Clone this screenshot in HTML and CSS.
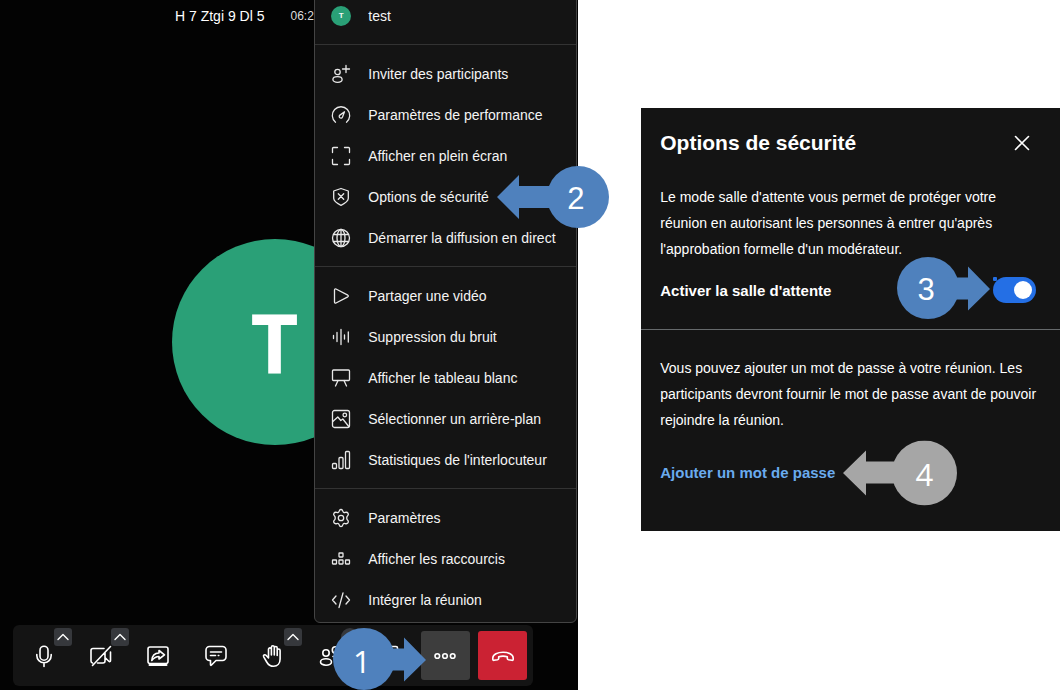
FILE: index.html
```html
<!DOCTYPE html>
<html lang="fr">
<head>
  <meta charset="UTF-8">
  <meta name="viewport" content="width=device-width, initial-scale=1">
  <title>Options de sécurité</title>
  <link rel="stylesheet" href="styles.css">
</head>
<body>

  <main class="guide">

    <section class="meeting">
      <header class="subject">
        <span class="subject-name">H 7 Ztgi 9 Dl 5</span>
        <span class="subject-timer">06:2</span>
      </header>

      <div class="stage">
        <div class="avatar">T</div>
      </div>

      <!-- menu "plus d'actions" -->
      <nav class="menu">
        <div class="menu-group">
          <button class="menu-item"><span class="mini-avatar">T</span><span class="label">test</span></button>
        </div>
        <div class="menu-group">
          <button class="menu-item">
            <svg class="icon" viewBox="0 0 20 20"><circle cx="6.5" cy="8" r="2.7"/><ellipse cx="6.5" cy="15.500" rx="4.6" ry="2.8"/><path d="M15 1.5v7M11.500 5h7"/></svg>
            <span class="label">Inviter des participants</span>
          </button>
          <button class="menu-item">
            <svg class="icon" viewBox="0 0 20 20"><path d="M4.500 17.200a8.700 8.700 0 1 1 11 0"/><path d="M13.500 6.800l-2 5.300a1.700 1.700 0 1 1-2.600-2z"/></svg>
            <span class="label">Paramètres de performance</span>
          </button>
          <button class="menu-item">
            <svg class="icon" viewBox="0 0 20 20"><path d="M1.500 6.500v-4a1 1 0 0 1 1-1h4M13.500 1.500h4a1 1 0 0 1 1 1v4M18.500 13.500v4a1 1 0 0 1-1 1h-4M6.500 18.500h-4a1 1 0 0 1-1-1v-4"/></svg>
            <span class="label">Afficher en plein écran</span>
          </button>
          <button class="menu-item">
            <svg class="icon" viewBox="0 0 20 20"><path d="M10 1.500l7.300 2.500v7.300c0 3-3.500 5.200-7.300 7-3.800-1.800-7.300-4-7.300-7V4z"/><path d="M7.300 6.800l5.400 5.400M12.700 6.800l-5.400 5.400"/></svg>
            <span class="label">Options de sécurité
              <span class="marker marker-left">
                <svg viewBox="0 0 112 62"><circle cx="81" cy="31" r="31"/><path d="M0 31L22 9v11h40v22H22v11z"/></svg>
                <span class="marker-number">2</span>
              </span>
            </span>
          </button>
          <button class="menu-item">
            <svg class="icon" viewBox="0 0 20 20"><circle cx="10" cy="10" r="8.500"/><ellipse cx="10" cy="10" rx="4" ry="8.500"/><path d="M2.500 6.500h15M2.500 13.500h15M10 1.500v17"/></svg>
            <span class="label">Démarrer la diffusion en direct</span>
          </button>
        </div>
        <div class="menu-group">
          <button class="menu-item">
            <svg class="icon" viewBox="0 0 20 20"><path d="M3.500 4c0-1 .7-1.400 1.500-1l11.800 6.200c.7.400.7 1.200 0 1.600L5 17c-.8.400-1.500 0-1.500-1z"/></svg>
            <span class="label">Partager une vidéo</span>
          </button>
          <button class="menu-item">
            <svg class="icon" viewBox="0 0 20 20"><path d="M2.500 8.500v3M6 5.500v9M10 2.500v15M13.500 8v4M17.300 5v10"/></svg>
            <span class="label">Suppression du bruit</span>
          </button>
          <button class="menu-item">
            <svg class="icon" viewBox="0 0 20 20"><rect x="1.500" y="2" width="17" height="10.500" rx="1"/><path d="M7 12.500l-2.500 5.500M13 12.500l2.500 5.500"/></svg>
            <span class="label">Afficher le tableau blanc</span>
          </button>
          <button class="menu-item">
            <svg class="icon" viewBox="0 0 20 20"><rect x="1.500" y="1.500" width="17" height="17" rx="2"/><circle cx="13.800" cy="6" r="1.800"/><path d="M1.800 12.500l5-4.500 3 3.500 2-1.500 6 7.500"/></svg>
            <span class="label">Sélectionner un arrière-plan</span>
          </button>
          <button class="menu-item">
            <svg class="icon" viewBox="0 0 20 20"><rect x="1.500" y="13.500" width="4" height="5" rx="1"/><rect x="8" y="7.500" width="4" height="11" rx="1"/><rect x="14.500" y="1.500" width="4" height="17" rx="1"/></svg>
            <span class="label">Statistiques de l'interlocuteur</span>
          </button>
        </div>
        <div class="menu-group">
          <button class="menu-item">
            <svg class="icon" viewBox="0 0 20 20"><circle cx="10" cy="10" r="2.700"/><path d="M8.200 3.200C8.500 2 9 1.500 10 1.500s1.500.5 1.800 1.700c.3 1.100 1.300 1.600 2.400 1.200 1.300-.4 2.200-.2 2.900.9.600 1.100.4 1.800-.6 2.600-1 1-1 3.200 0 4.200 1 .8 1.200 1.500.6 2.600-.7 1.100-1.600 1.300-2.900.9-1.100-.4-2.100.1-2.400 1.200-.3 1.200-.8 1.700-1.800 1.700s-1.500-.5-1.800-1.700c-.3-1.100-1.300-1.600-2.400-1.200-1.300.4-2.200.2-2.900-.9-.6-1.100-.4-1.800.6-2.600 1-1 1-3.200 0-4.200-1-.8-1.200-1.500-.6-2.600.7-1.100 1.600-1.300 2.900-.9 1.100.4 2.100-.1 2.400-1.200z"/></svg>
            <span class="label">Paramètres</span>
          </button>
          <button class="menu-item">
            <svg class="icon" viewBox="0 0 20 20"><rect x="8" y="4" width="4" height="4" rx=".5"/><rect x="1.500" y="11" width="4" height="4" rx=".5"/><rect x="8" y="11" width="4" height="4" rx=".5"/><rect x="14.500" y="11" width="4" height="4" rx=".5"/></svg>
            <span class="label">Afficher les raccourcis</span>
          </button>
          <button class="menu-item">
            <svg class="icon" viewBox="0 0 20 20"><path d="M5 6l-3.500 4L5 14M15 6l3.500 4-3.500 4M12 3L8 17.500"/></svg>
            <span class="label">Intégrer la réunion</span>
          </button>
        </div>
      </nav>

      <div class="toolbar">
        <div class="tool">
          <button class="tool-button" aria-label="Micro">
            <svg viewBox="0 0 24 24"><rect x="8" y="2.200" width="8" height="14" rx="4"/><path d="M4.800 10.500v1a7.200 7.200 0 0 0 14.400 0v-1M12 19v3.500"/></svg>
          </button>
          <button class="chevron" aria-label="Paramètres audio"><svg viewBox="0 0 18 18"><path d="M4 11.500l5-5 5 5"/></svg></button>
        </div>
        <div class="tool">
          <button class="tool-button" aria-label="Caméra">
            <svg viewBox="0 0 24 24"><path d="M15 4.500H4a2 2 0 0 0-2 2v10.500c0 1 .6 1.700 1.500 2M8.500 19H14a2 2 0 0 0 2-2V8.500M16 13.500l3.800 3.700c.8.700 1.700.5 1.700-.7V8M3.500 21.500l18-19"/></svg>
          </button>
          <button class="chevron" aria-label="Paramètres vidéo"><svg viewBox="0 0 18 18"><path d="M4 11.500l5-5 5 5"/></svg></button>
        </div>
        <div class="tool">
          <button class="tool-button" aria-label="Partager l'écran">
            <svg viewBox="0 0 24 24"><rect x="2" y="3" width="20" height="16.500" rx="2"/><path d="M3.500 21h17" stroke-width="2"/><path d="M5.800 16.500c.4-5 3.400-7.500 7.200-7.500V6.500l5.500 4.300-5.500 4.200v-2.500c-3.200 0-5 1.200-7.200 4z"/></svg>
          </button>
        </div>
        <div class="tool">
          <button class="tool-button" aria-label="Discussion">
            <svg viewBox="0 0 24 24"><path d="M5.500 2.500h13A3.500 3.500 0 0 1 22 6v7a3.500 3.500 0 0 1-3.500 3.500H12l-4.500 4.500c-.6.600-1 .4-1-.4v-4.100h-1A3.500 3.500 0 0 1 2 13V6a3.500 3.500 0 0 1 3.500-3.500z"/><path d="M6.500 8h11M6.500 11.500h5M14.300 11.500h.5"/></svg>
          </button>
        </div>
        <div class="tool">
          <button class="tool-button" aria-label="Lever la main">
            <svg viewBox="0 0 24 24"><path d="M7.500 14V5.300a1.400 1.400 0 0 1 2.900 0V11 3.200a1.400 1.400 0 0 1 2.900 0V11 4a1.400 1.400 0 0 1 2.900 0v7.500-5a1.400 1.400 0 0 1 2.900 0V15c0 4.500-2.600 7.300-6.500 7.300-3.300 0-5.300-1.500-6.900-4.300l-3-5.200c-.8-1.500 1-2.800 2.300-1.500z"/></svg>
          </button>
          <button class="chevron" aria-label="Réactions"><svg viewBox="0 0 18 18"><path d="M4 11.500l5-5 5 5"/></svg></button>
        </div>
        <div class="tool">
          <button class="tool-button" aria-label="Participants">
            <svg viewBox="0 0 24 24"><circle cx="7" cy="9" r="3.200"/><ellipse cx="7" cy="18" rx="5.500" ry="3.200"/><circle cx="16.500" cy="6" r="3.200"/><path d="M14 12.500c4-.5 7.500.8 7.500 3.200 0 1.500-1.500 2.600-4 3"/></svg>
          </button>
          <span class="count"></span>
        </div>
        <div class="tool">
          <button class="tool-button" aria-label="Mosaïque">
            <svg viewBox="0 0 24 24"><rect x="2.500" y="2.500" width="7.500" height="7.500" rx="1.500"/><rect x="14" y="2.500" width="7.500" height="7.500" rx="1.500"/><rect x="2.500" y="14" width="7.500" height="7.500" rx="1.500"/><rect x="14" y="14" width="7.500" height="7.500" rx="1.500"/></svg>
          </button>
        </div>
        <div class="tool">
          <button class="tool-button more" aria-label="Plus d'actions">
            <svg viewBox="0 0 24 24"><circle cx="4.300" cy="12" r="2.300"/><circle cx="12" cy="12" r="2.300"/><circle cx="19.700" cy="12" r="2.300"/></svg>
          </button>
          <span class="marker marker-right marker-more">
            <svg viewBox="0 0 93 62"><circle cx="31" cy="31" r="31"/><path d="M93 32L71 9.500v11H50v22h21v11z"/></svg>
            <span class="marker-number open">1</span>
          </span>
        </div>
        <div class="tool">
          <button class="tool-button hangup" aria-label="Quitter la réunion">
            <svg viewBox="0 0 24 24"><path d="M1.800 14c0-3.800 5-5.800 10.200-5.800s10.200 2 10.200 5.800v1.200c0 .9-.5 1.300-1.300 1.100l-3.400-.6c-.8-.2-1.200-.6-1.200-1.300v-1.600c-2.800-.9-5.800-.9-8.600 0v1.600c0 .7-.4 1.100-1.200 1.300l-3.400.6c-.8.200-1.300-.2-1.300-1.100z"/></svg>
          </button>
        </div>
      </div>
    </section>

    <section class="dialog">
      <div class="dialog-part">
        <div class="dialog-head">
          <h1>Options de sécurité</h1>
          <button class="close" aria-label="Fermer"><svg viewBox="0 0 16 16"><path d="M1.500 1.500l13 13M14.500 1.500l-13 13"/></svg></button>
        </div>
        <p>Le mode salle d'attente vous permet de protéger votre réunion en autorisant les personnes à entrer qu'après l'approbation formelle d'un modérateur.</p>
        <div class="lobby">
          <label for="lobby">Activer la salle d'attente</label>
          <div class="switch">
            <input type="checkbox" id="lobby" checked>
            <span class="marker marker-right marker-lobby">
              <svg viewBox="0 0 93 62"><circle cx="31" cy="31" r="31"/><path d="M93 32L71 9.500v11H50v22h21v11z"/></svg>
              <span class="marker-number">3</span>
            </span>
          </div>
        </div>
      </div>
      <div class="dialog-part">
        <p>Vous pouvez ajouter un mot de passe à votre réunion. Les participants devront fournir le mot de passe avant de pouvoir rejoindre la réunion.</p>
        <div class="password">
          <a href="#">Ajouter un mot de passe</a>
          <span class="marker marker-left marker-grey">
            <svg viewBox="0 0 114 65"><circle cx="81.500" cy="32.500" r="32.500"/><path d="M0 32.500L23 10v11h40v22H23v12z"/></svg>
            <span class="marker-number open">4</span>
          </span>
        </div>
      </div>
    </section>

  </main>

</body>
</html>
```
FILE: styles.css
```css
* {
  box-sizing: border-box;
}
body {
  margin: 0;
  background-color: #fff;
  color: #fff;
  font-family: "Liberation Sans", Arial, sans-serif;
  font-size: 14px;
}
button {
  padding: 0;
  border: none;
  background: none;
  color: inherit;
  font: inherit;
  cursor: pointer;
}
svg {
  display: block;
  fill: none;
  stroke: #fff;
  stroke-linecap: round;
  stroke-linejoin: round;
}
.guide {
  display: grid;
  grid-template-columns: 58fr 42fr;
  column-gap: 63px;
  align-items: start;
}

/* réunion */
.meeting {
  position: relative;
  display: flex;
  flex-direction: column;
  min-height: 99vh;
  padding-bottom: 4px;
  background-color: #030303;
}
.subject {
  display: flex;
  align-items: center;
  gap: 26px;
  height: 32px;
  padding-left: 175px;
}
.subject-timer {
  font-size: 12px;
  color: #ddd;
}
.stage {
  flex: 1;
  display: flex;
  align-items: center;
  justify-content: center;
  padding: 26px 29px 0 0;
}
.avatar {
  display: flex;
  align-items: center;
  justify-content: center;
  width: 206px;
  height: 206px;
  border-radius: 50%;
  background-color: #2aa077;
  font-family: "Open Sans", sans-serif;
  font-size: 83px;
  font-weight: bold;
}

/* menu */
.menu {
  position: absolute;
  right: 1px;
  bottom: 67px;
  z-index: 1;
  width: 263px;
  border: 1px solid #444;
  border-radius: 6px;
  background-color: #141414;
}
.menu-group {
  padding: 8px 0;
}
.menu-group + .menu-group {
  border-top: 1px solid #333;
}
.menu-group:last-child {
  padding-bottom: 2px;
}
.menu-item {
  display: flex;
  align-items: center;
  gap: 17px;
  width: 100%;
  height: 41px;
  padding-left: 16px;
  color: #f5f5f5;
  text-align: left;
  white-space: nowrap;
}
.icon {
  width: 20px;
  height: 20px;
  stroke: #e8e8e8;
  stroke-width: 1.3;
}
.mini-avatar {
  width: 20px;
  height: 20px;
  border-radius: 50%;
  background-color: #2aa077;
  font-size: 8px;
  font-weight: bold;
  line-height: 20px;
  text-align: center;
}
.label {
  position: relative;
}

/* barre d'outils */
.toolbar {
  display: flex;
  justify-content: space-between;
  width: 90%;
  margin-left: 13px;
  padding: 6px;
  border-radius: 6px;
  background-color: #141414;
}
.tool {
  position: relative;
}
.tool-button {
  display: flex;
  align-items: center;
  justify-content: center;
  width: 49px;
  height: 49px;
  border-radius: 3px;
}
.tool-button svg {
  width: 24px;
  height: 24px;
  stroke-width: 1.6;
}
.more {
  background-color: #3d3d3d;
}
.hangup {
  background-color: #cb2233;
}
.chevron,
.count {
  position: absolute;
  top: -3px;
  right: -4px;
  width: 18px;
  height: 18px;
  border-radius: 3px;
  background-color: #36383c;
}
.chevron svg {
  stroke-width: 1.4;
}
.count {
  right: -4px;
  border-radius: 50%;
}

/* boîte de dialogue */
.dialog {
  margin-top: 108px;
  padding-bottom: 20px;
  background-color: #141414;
}
.dialog-part {
  padding: 25px 19px;
}
.dialog-part:first-child {
  padding-top: 19px;
  padding-bottom: 26px;
  border-bottom: 1px solid #666a6c;
}
.dialog-head,
.lobby {
  display: flex;
  align-items: center;
  justify-content: space-between;
  padding-right: 5px;
}
h1 {
  margin: 0;
  font-size: 21px;
  line-height: 32px;
}
.close {
  padding: 6px;
}
.close svg {
  width: 16px;
  height: 16px;
  stroke-width: 1.6;
}
.dialog p {
  margin: 0;
  line-height: 26px;
}
.dialog-head + p {
  margin-top: 25px;
}
.lobby {
  margin-top: 15px;
  font-size: 15px;
  font-weight: bold;
}
.switch {
  position: relative;
  height: 26px;
}
.switch input {
  appearance: none;
  display: flex;
  align-items: center;
  justify-content: flex-end;
  width: 43px;
  height: 26px;
  margin: 0;
  padding-right: 4px;
  border-radius: 13px;
  background-color: #246fe5;
}
.switch input::before {
  content: "";
  width: 18px;
  height: 18px;
  border-radius: 50%;
  background-color: #fff;
}
/* petit point au coin de l'interrupteur */
.switch::before {
  content: "";
  position: absolute;
  top: 0;
  left: 0;
  width: 4px;
  height: 4px;
  border-radius: 1px;
  background-color: #246fe5;
}
.password {
  position: relative;
  width: fit-content;
  margin-top: 27px;
  line-height: 26px;
}
.password a {
  color: #6aabee;
  font-size: 15px;
  font-weight: bold;
  text-decoration: none;
}

/* repères numérotés */
.marker {
  position: absolute;
  z-index: 2;
  width: 93px;
  height: 62px;
  color: #fff;
  font-size: 31px;
  font-weight: normal;
  line-height: 62px;
  text-align: center;
}
.marker svg {
  width: 100%;
  height: 100%;
  fill: #4f81bd;
  stroke: none;
}
.marker-number {
  position: absolute;
  top: 2px;
  width: 58px;
}
.marker-number.open {
  font-family: "Open Sans", sans-serif;
}
.marker-left {
  top: 50%;
  left: calc(100% + 8px);
  width: 112px;
  transform: translateY(-50%);
}
.marker-left .marker-number {
  right: 4px;
}
.marker-right .marker-number {
  left: 0;
}
.marker-more {
  right: calc(100% - 5px);
  bottom: -10px;
}
.marker-lobby {
  right: calc(100% + 3px);
  bottom: -16px;
}
.marker-grey {
  width: 114px;
  height: 65px;
}
.marker-grey svg {
  fill: #a6a6a6;
}
```
